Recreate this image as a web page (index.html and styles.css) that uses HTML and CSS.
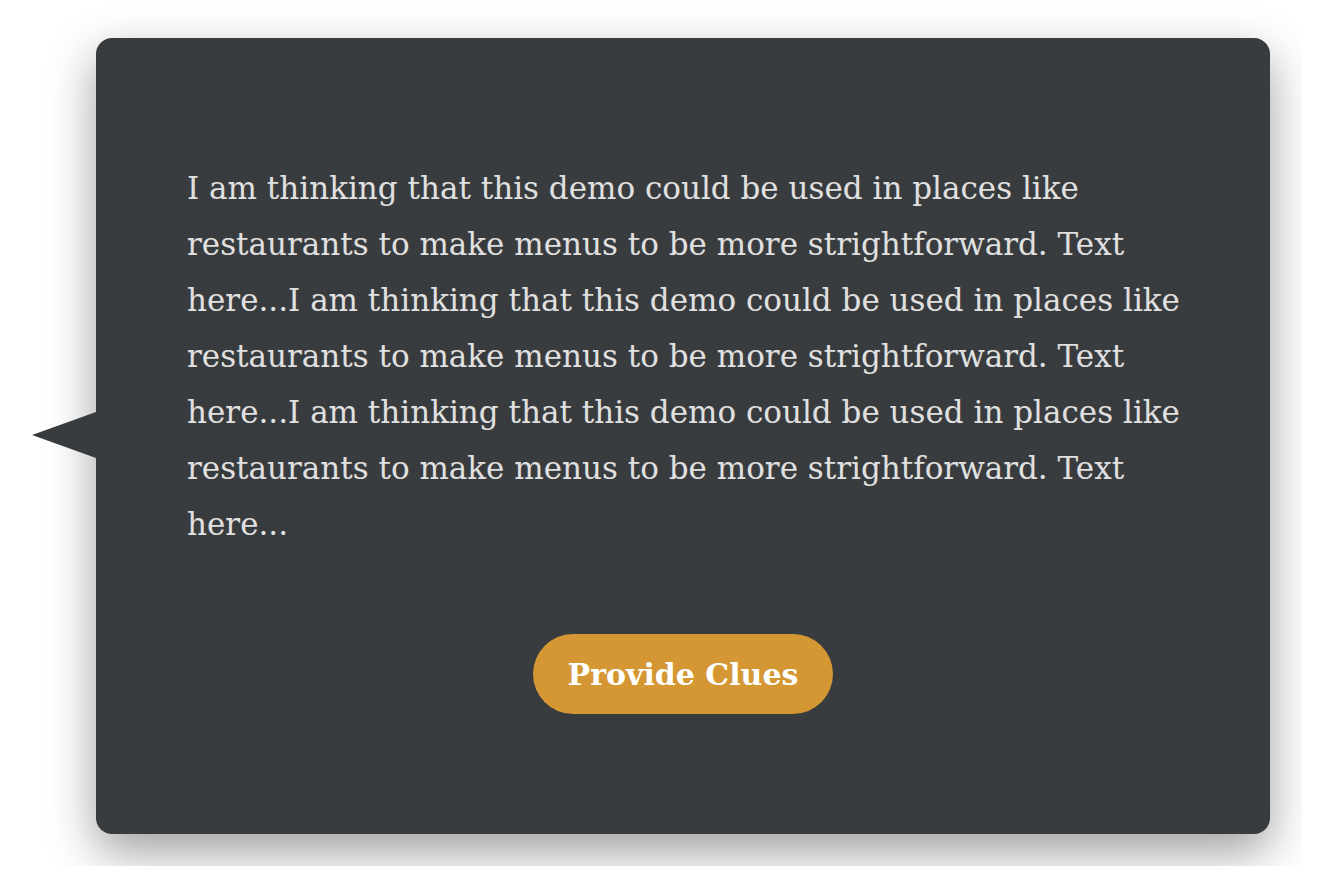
FILE: index.html
```html
<!DOCTYPE html>
<html lang="en">
<head>
<meta charset="utf-8">
<title>Clue</title>
<link rel="stylesheet" href="styles.css">
</head>
<body>
<div class="stage">
  <div class="bubble">
    <p class="bubble-text">I am thinking that this demo could be used in places like restaurants to make menus to be more strightforward. Text here...I am thinking that this demo could be used in places like restaurants to make menus to be more strightforward. Text here...I am thinking that this demo could be used in places like restaurants to make menus to be more strightforward. Text here...</p>
    <div class="actions">
      <button class="clue-btn" type="button">Provide Clues</button>
    </div>
  </div>
</div>
</body>
</html>
```

FILE: styles.css
```css
html, body {
  margin: 0;
  padding: 0;
  background: #ffffff;
}

.stage {
  width: 1302px;
  height: 866px;
  overflow: hidden;
  padding: 38px 0 0 96px;
  box-sizing: border-box;
}

.bubble {
  position: relative;
  width: 1174px;
  height: 796px;
  box-sizing: border-box;
  background: #393c3f;
  border-radius: 16px;
  box-shadow: 0 18px 48px rgba(0, 0, 0, 0.38);
  padding: 122px 91px 0 91px;
  display: flex;
  flex-direction: column;
}

.bubble::before {
  content: "";
  position: absolute;
  left: -64px;
  top: 374px;
  width: 0;
  height: 0;
  border-top: 23px solid transparent;
  border-bottom: 23px solid transparent;
  border-right: 64px solid #393c3f;
}

.bubble-text {
  margin: 0 -13px 0 0;
  font-family: "DejaVu Serif", serif;
  font-size: 31px;
  line-height: 56px;
  color: #e0e0e0;
}

.actions {
  display: flex;
  justify-content: center;
  margin-top: 82px;
}

.clue-btn {
  width: 300px;
  height: 80px;
  border: none;
  border-radius: 40px;
  background: #d49733;
  color: #ffffff;
  font-family: "DejaVu Serif", serif;
  font-weight: bold;
  font-size: 30px;
  cursor: pointer;
}
```
